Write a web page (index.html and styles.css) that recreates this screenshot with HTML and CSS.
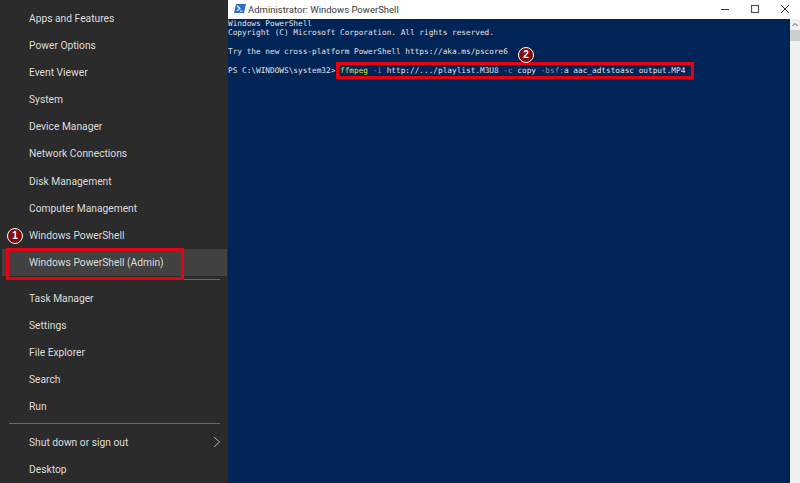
FILE: index.html
```html
<!DOCTYPE html>
<html lang="en">
<head>
<meta charset="utf-8">
<title>Windows PowerShell</title>
<link rel="stylesheet" href="styles.css">
</head>
<body>
<div class="desktop">
  <nav class="menu">
    <div class="item">Apps and Features</div>
    <div class="item">Power Options</div>
    <div class="item">Event Viewer</div>
    <div class="item">System</div>
    <div class="item">Device Manager</div>
    <div class="item">Network Connections</div>
    <div class="item">Disk Management</div>
    <div class="item">Computer Management</div>
    <div class="item">Windows PowerShell</div>
    <div class="item active">Windows PowerShell (Admin)</div>
    <div class="sep"></div>
    <div class="item">Task Manager</div>
    <div class="item">Settings</div>
    <div class="item">File Explorer</div>
    <div class="item">Search</div>
    <div class="item">Run</div>
    <div class="sep"></div>
    <div class="item has-sub">Shut down or sign out
      <svg class="chev" width="8" height="12" viewBox="0 0 8 12"><path d="M1 1l5.500 5L1 11" fill="none" stroke="#b5b5b5" stroke-width="1"/></svg>
    </div>
    <div class="item">Desktop</div>
  </nav>
  <main class="window">
    <header class="titlebar">
      <svg class="ps-icon" width="12" height="9" viewBox="0 0 12 9"><path d="M2 0h10l-2 9H0z" fill="#2d6fc4"/><path d="M3 1.800l3 2.400-3 2.600" fill="none" stroke="#fff" stroke-width="1.100"/><path d="M6 7h2.500" stroke="#fff" stroke-width="1"/></svg>
      <span class="title">Administrator: Windows PowerShell</span>
      <div class="controls">
        <svg width="10" height="10" viewBox="0 0 10 10"><path d="M1 5.500h8" stroke="#333" stroke-width="1"/></svg>
        <svg width="10" height="10" viewBox="0 0 10 10"><rect x="1.500" y="1.500" width="7" height="7" fill="none" stroke="#555" stroke-width="1.200"/></svg>
        <svg width="10" height="10" viewBox="0 0 10 10"><path d="M1 1l8 8M9 1l-8 8" stroke="#333" stroke-width="1"/></svg>
      </div>
    </header>
    <div class="body">
      <pre class="console">Windows PowerShell
Copyright (C) Microsoft Corporation. All rights reserved.

Try the new cross-platform PowerShell https://aka.ms/pscore6

PS C:\WINDOWS\system32&gt; <span class="cmd">ffmpeg</span> <span class="dim">-i</span> http://.../playlist.M3U8 <span class="dim">-c</span> copy <span class="dim">-bsf:</span>a aac_adtstoasc output.MP4</pre>
      <div class="scrollbar">
        <svg class="arrow" width="10" height="10" viewBox="0 0 10 10"><path d="M2.500 6l2.500-2.500L7.500 6" fill="none" stroke="#555" stroke-width="1"/></svg>
        <div class="thumb"></div>
      </div>
    </div>
  </main>
  <div class="redbox box-admin"></div>
  <div class="redbox box-cmd"></div>
  <div class="badge badge-one">1</div>
  <div class="badge badge-two">2</div>
</div>
</body>
</html>
```
FILE: styles.css
```css
* { box-sizing: border-box; }
html, body { margin: 0; height: 100%; }
body { overflow: hidden; background: #2b2b2b; }
.desktop { position: relative; display: flex; width: 800px; height: 483px; overflow: hidden; }

.menu {
  width: 228px;
  flex: none;
  background: #2b2b2b;
  padding-top: 4.500px;
  display: flex;
  flex-direction: column;
  font-family: Roboto, sans-serif;
  font-size: 10.250px;
  color: #dcdcdc;
}
.item {
  height: 27.2px;
  line-height: 27.2px;
  padding-left: 29px;
  white-space: nowrap;
  position: relative;
}
.item.active { background: #414141; margin-left: 2px; margin-right: 1px; padding-left: 27px; }
.sep { height: 1px; background: #6a6a6a; margin: 3px 8px 4.5px 9px; }
.has-sub { display: flex; align-items: center; justify-content: space-between; padding-right: 7px; }

.window { flex: 1; display: flex; flex-direction: column; background: #fff; min-width: 0; }
.titlebar {
  height: 19px;
  flex: none;
  display: flex;
  align-items: center;
  padding-left: 6px;
  background: #fff;
}
.ps-icon { flex: none; margin-top: -2px; }
.title {
  margin-left: 2px;
  font-family: Roboto, sans-serif;
  font-size: 9.500px;
  color: #3a3a3a;
  white-space: nowrap;
  margin-top: -1px;
}
.controls { margin-left: auto; display: flex; gap: 20px; padding-right: 10px; margin-top: -2px; }
.controls svg { display: block; }

.body { flex: 1; display: flex; min-height: 0; }
.console {
  flex: 1;
  margin: 0;
  padding: 0;
  background: #012456;
  color: #e0e0e0;
  font-family: "DejaVu Sans Mono", monospace;
  font-size: 7.750px;
  line-height: 9.450px;
  overflow: hidden;
}
.cmd { color: #d8e040; }
.dim { color: #8a8f9c; }
.scrollbar { width: 10px; flex: none; background: #f0f0f0; }
.arrow { display: block; margin-top: 1px; }
.thumb { height: 11px; background: #cdcdcd; }

.redbox { position: absolute; border: 3px solid #e60012; }
.box-admin { left: 6px; top: 248px; width: 178px; height: 32px; }
.box-cmd { left: 336px; top: 62px; width: 358px; height: 17px; }

.badge {
  position: absolute;
  width: 16px;
  height: 16px;
  border-radius: 50%;
  background: #800a10;
  border: 1.500px solid #fff;
  color: #fff;
  font-family: "Liberation Sans", sans-serif;
  font-weight: bold;
  font-size: 10px;
  line-height: 13px;
  text-align: center;
}
.badge-one { left: 7px; top: 228px; }
.badge-two { left: 518px; top: 47px; }
```
